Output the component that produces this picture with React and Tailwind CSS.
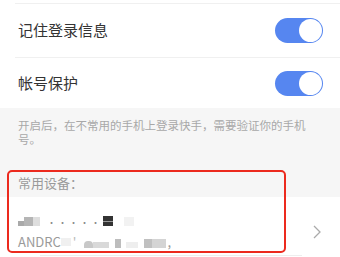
import React from 'react';

const font = { fontFamily: '"Noto Sans CJK SC", "Noto Sans", sans-serif' };

function Toggle() {
  return (
    <div className="w-[48px] h-[25px] rounded-full bg-[#5686f0] flex items-center justify-end p-[1px]">
      <div className="w-[23px] h-[23px] rounded-full bg-white" />
    </div>
  );
}

function SwitchRow({ label, height }) {
  return (
    <div className={`flex items-center justify-between pl-[18px] pr-[17px] ${height}`}>
      <span className="text-[15px] text-[#333]">{label}</span>
      <Toggle />
    </div>
  );
}

export default function App() {
  return (
    <div className="relative w-[340px] h-[257px] overflow-hidden bg-white" style={font}>
      <div className="h-[3px]" />
      <div className="ml-[15px] border-t border-[#f0f0f0]" />
      <SwitchRow label="记住登录信息" height="h-[53px]" />
      <div className="ml-[15px] border-t border-[#f0f0f0]" />
      <SwitchRow label="帐号保护" height="h-[50px]" />

      {/* gray section */}
      <div className="bg-[#f6f6f6] pl-[18px] pr-[30px] pt-[10px] pb-[5px]">
        <p className="text-[11.5px] leading-[14px] text-[#a8a8a8]">
          开启后，在不常用的手机上登录快手，需要验证你的手机号。
        </p>
        <div className="mt-[28px] h-[18px] flex items-center text-[13px] text-[#9a9a9a]">常用设备：</div>
      </div>

      {/* device row */}
      <div className="flex items-center justify-between pl-[18px] pr-[19px] pt-[16px] pb-[2px]">
        <div className="flex flex-col gap-[4px]">
          <div className="h-[16px] flex items-center">
            <span className="w-[6px] h-[5px] mt-[4px] bg-[#a9a9a9]" />
            <span className="w-[9px] h-[9px] bg-[#b5b5b5]" />
            <span className="w-[7px] h-[9px] bg-[#dedede]" />
            <span className="ml-[7px] text-[9px] tracking-[2px] text-[#888] leading-none mt-[2px]">·····</span>
            <span className="ml-[1px] w-[10px] h-[10px] bg-[#333] flex items-center">
              <span className="w-full h-[1px] bg-[#999]" />
            </span>
            <span className="ml-[11px] w-[10px] h-[9px] bg-[#f2f2f2]" />
          </div>
          <div className="h-[18px] flex items-center text-[13px] text-[#9a9a9a]">
            <span>ANDRC</span>
            <span className="w-[10px] h-[8px] bg-[#f0f0f0]" />
            <span className="ml-[2px] text-[#bbb]">'</span>
            <span className="ml-[8px] w-[9px] h-[7px] mt-[4px] bg-[#c8c8c8] rounded-t-[4px]" />
            <span className="w-[16px] h-[6px] mt-[5px] bg-[#d9d9d9]" />
            <span className="ml-[6px] w-[6px] h-[9px] mt-[2px] bg-[#bdbdbd]" />
            <span className="ml-[5px] w-[12px] h-[6px] mt-[5px] bg-[#eeeeee]" />
            <span className="ml-[6px] w-[8px] h-[9px] mt-[2px] bg-[#c0c0c0]" />
            <span className="w-[14px] h-[9px] mt-[2px] bg-[#d4d4d4]" />
            <span className="ml-[1px] text-[#999]">,</span>
          </div>
        </div>
        <svg width="8" height="14" viewBox="0 0 8 14">
          <path d="M1 1l6 6-6 6" fill="none" stroke="#aaa" strokeWidth="1.3" />
        </svg>
      </div>
      <div className="ml-[40px] mr-[38px] mt-[2px] border-t border-[#eeeeee]" />

      {/* annotation box */}
      <div className="absolute left-[7px] top-[170px] w-[279px] h-[83px] border-2 border-[#ec2a1e] rounded-[5px]" />
    </div>
  );
}
